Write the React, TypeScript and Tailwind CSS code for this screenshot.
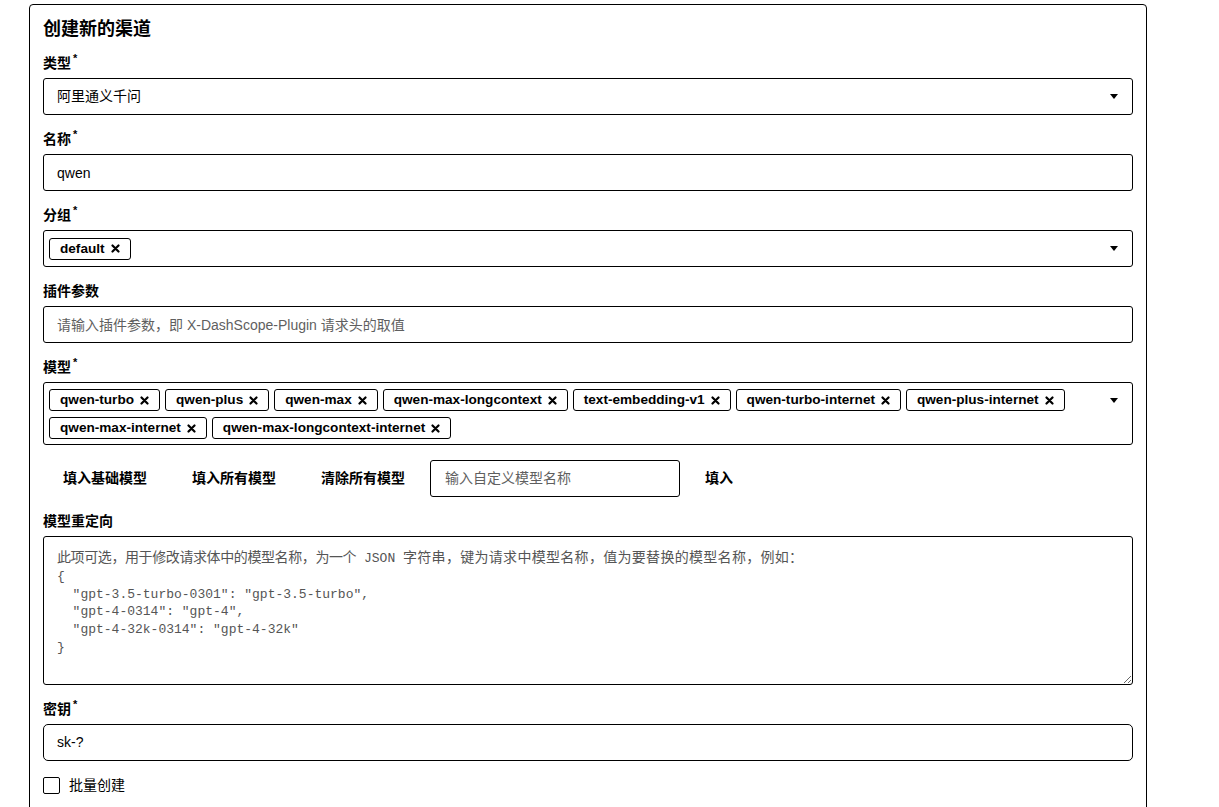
import React from "react";

const FONT = "font-['Liberation_Sans','Noto_Sans_CJK_SC',sans-serif]";

const MODELS = [
  "qwen-turbo",
  "qwen-plus",
  "qwen-max",
  "qwen-max-longcontext",
  "text-embedding-v1",
  "qwen-turbo-internet",
  "qwen-plus-internet",
  "qwen-max-internet",
  "qwen-max-longcontext-internet",
];

function Caret() {
  return (
    <svg width="8" height="5" viewBox="0 0 8 5" className="shrink-0">
      <polygon points="0,0 8,0 4,5" fill="#000" />
    </svg>
  );
}

function Cross() {
  return (
    <svg width="9" height="9" viewBox="0 0 9 9" className="shrink-0">
      <path d="M1.5 1.5 L7.5 7.5 M7.5 1.5 L1.5 7.5" stroke="#000" strokeWidth="2.2" strokeLinecap="round" />
    </svg>
  );
}

function Tag({ name }: { name: string }) {
  return (
    <span className="inline-flex h-[22px] items-center gap-[6px] rounded-[3px] border border-black px-[10px] text-[13.6px] font-bold leading-none">
      {name}
      <Cross />
    </span>
  );
}

function Field({
  label,
  required,
  children,
}: {
  label: string;
  required?: boolean;
  children: React.ReactNode;
}) {
  return (
    <div className="flex flex-col gap-[5px]">
      <div className="h-5 text-[14px] font-bold leading-5">
        {label}
        {required && <span className="ml-[2px] align-top text-[11px] leading-none">*</span>}
      </div>
      {children}
    </div>
  );
}

function TagBox({ tags }: { tags: string[] }) {
  return (
    <div className="flex items-start rounded-[3px] border border-black pb-[5px] pl-[5px] pr-[14px] pt-[6px]">
      <div className="flex flex-1 flex-wrap gap-x-[5px] gap-y-[6px]">
        {tags.map((t) => (
          <Tag key={t} name={t} />
        ))}
      </div>
      <div className="mt-[9px]">
        <Caret />
      </div>
    </div>
  );
}

export default function App() {
  return (
    <div className={`min-h-screen bg-white pl-[29px] pt-[4px] text-black ${FONT}`}>
      <div className="w-[1118px] rounded-[4px] border border-black px-[13px] pb-8 pt-[11px]">
        <h1 className="mb-[11px] h-[26px] text-[18px] font-bold leading-[26px]">创建新的渠道</h1>

        <div className="flex flex-col gap-[14px]">
          <Field label="类型" required>
            <div className="flex h-[37px] items-center justify-between rounded-[3px] border border-black pl-[13px] pr-[14px] text-[14px]">
              <span>阿里通义千问</span>
              <Caret />
            </div>
          </Field>

          <Field label="名称" required>
            <input
              defaultValue="qwen"
              className="h-[37px] rounded-[3px] border border-black px-[13px] text-[14px] outline-none"
            />
          </Field>

          <Field label="分组" required>
            <div className="flex h-[37px] items-center rounded-[3px] border border-black pl-[5px] pr-[14px]">
              <div className="flex flex-1">
                <Tag name="default" />
              </div>
              <Caret />
            </div>
          </Field>

          <Field label="插件参数">
            <input
              placeholder="请输入插件参数，即 X-DashScope-Plugin 请求头的取值"
              className="h-[37px] rounded-[3px] border border-black px-[13px] text-[14px] outline-none placeholder:text-[#5f5f5f]"
            />
          </Field>

          <Field label="模型" required>
            <TagBox tags={MODELS} />
          </Field>

          <div className="mt-px flex h-[37px] gap-[5px] text-[14px] font-bold">
            <button className="px-5">填入基础模型</button>
            <button className="px-5">填入所有模型</button>
            <button className="px-5">清除所有模型</button>
            <input
              placeholder="输入自定义模型名称"
              className="w-[250px] rounded-[3px] border border-black px-[14px] font-normal outline-none placeholder:text-[#5f5f5f]"
            />
            <button className="px-5">填入</button>
          </div>

          <Field label="模型重定向">
            <div className="h-[149px] resize-y overflow-auto rounded-[3px] border border-black px-[13px] pt-[11px] font-['Liberation_Mono','Noto_Sans_CJK_SC',monospace] text-[13px] leading-[17.8px] text-[#555] whitespace-pre">
              <div>
                <span className="font-['Noto_Sans_CJK_SC',sans-serif] text-[14px] tracking-[-0.4px]">
                  此项可选，用于修改请求体中的模型名称，为一个
                </span>
                {" JSON "}
                <span className="font-['Noto_Sans_CJK_SC',sans-serif] text-[14px] tracking-[0.3px]">
                  字符串，键为请求中模型名称，值为要替换的模型名称，例如：
                </span>
              </div>
              <div>{"{"}</div>
              <div>{'  "gpt-3.5-turbo-0301": "gpt-3.5-turbo",'}</div>
              <div>{'  "gpt-4-0314": "gpt-4",'}</div>
              <div>{'  "gpt-4-32k-0314": "gpt-4-32k"'}</div>
              <div>{"}"}</div>
            </div>
          </Field>

          <Field label="密钥" required>
            <div className="flex h-[37px] items-center rounded-[5px] border border-black px-[13px] text-[14px]">
              sk-?
            </div>
          </Field>

          <label className="flex h-5 items-center gap-[9px] text-[14px]">
            <span className="h-[17px] w-[17px] rounded-[2px] border border-black" />
            批量创建
          </label>
        </div>
      </div>
    </div>
  );
}
